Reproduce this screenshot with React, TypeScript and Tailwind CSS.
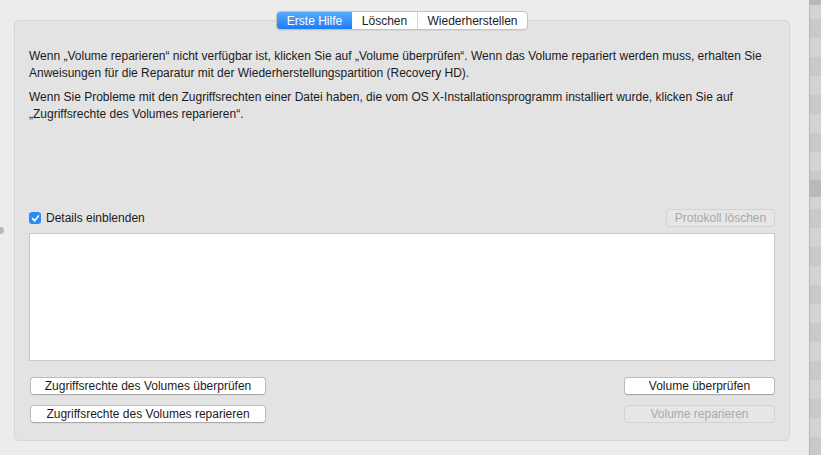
import React from "react";

const font = { fontFamily: '"Liberation Sans", Arial, sans-serif' };

function Btn({ children, disabled, w }: { children: React.ReactNode; disabled?: boolean; w: string }) {
  return (
    <div
      className={`${w} h-[18px] flex items-center justify-center rounded-[4px] border text-[12px] leading-none ${
        disabled
          ? "border-[#d2d2d2] bg-[#e6e6e6] text-[#a9a9a9]"
          : "border-[#bdbdbd] border-b-[#a9a9a9] bg-white text-[#1c1c1c] shadow-[0_0.5px_0_rgba(0,0,0,0.08)]"
      }`}
    >
      {children}
    </div>
  );
}

export default function App() {
  return (
    <div className="w-[821px] h-[455px] flex bg-[#ececec] overflow-hidden relative" style={font}>
      <div className="absolute left-[-3px] top-[227px] w-[7px] h-[7px] rounded-full bg-[#b9b9b9]" />
      <div className="w-[809px] h-full">
        <div className="ml-[14px] mt-[20px] w-[776px] h-[421px] rounded-[5px] bg-[#e3e3e3] border border-[#d6d6d6] flex flex-col px-[14px]">
          <div className="-mt-[10px] flex justify-center">
            <div className="flex h-[19px] rounded-[4px] border border-[#c3c3c3] bg-white text-[12px] leading-none overflow-hidden shadow-[0_1px_0_rgba(0,0,0,0.05)]">
              <div className="w-[75px] flex items-center justify-center text-white bg-[linear-gradient(#58acfc,#1c7cf4)]">
                Erste Hilfe
              </div>
              <div className="w-[65px] flex items-center justify-center text-[#1c1c1c]">Löschen</div>
              <div className="w-[110px] flex items-center justify-center text-[#1c1c1c] border-l border-[#d3d3d3]">
                Wiederherstellen
              </div>
            </div>
          </div>
          <div className="mt-[18px] text-[12px] leading-[17px] text-[#1b1b1b] pr-[10px]">
            <p>
              Wenn „Volume reparieren“ nicht verfügbar ist, klicken Sie auf „Volume überprüfen“. Wenn das Volume repariert werden muss, erhalten Sie Anweisungen für die Reparatur mit der Wiederherstellungspartition (Recovery HD).
            </p>
            <p className="mt-[7px]">
              Wenn Sie Probleme mit den Zugriffsrechten einer Datei haben, die vom OS X-Installationsprogramm installiert wurde, klicken Sie auf „Zugriffsrechte des Volumes reparieren“.
            </p>
          </div>
          <div className="mt-[86px] flex items-center justify-between h-[18px]">
            <div className="flex items-center gap-[5px]">
              <div className="w-[12px] h-[12px] rounded-[3px] bg-[#2a8bf2] flex items-center justify-center">
                <svg width="9" height="9" viewBox="0 0 10 10">
                  <path d="M1.8 5.2 L4.1 7.6 L8.3 2.2" fill="none" stroke="white" strokeWidth="1.8" strokeLinecap="round" strokeLinejoin="round" />
                </svg>
              </div>
              <span className="text-[12px] text-[#1b1b1b]">Details einblenden</span>
            </div>
            <Btn w="w-[109px]" disabled>
              Protokoll löschen
            </Btn>
          </div>
          <div className="mt-[6px] h-[128px] bg-white border border-[#c9c9c9]" />
          <div className="mt-[16px] flex justify-between pl-[1px]">
            <Btn w="w-[236px]">Zugriffsrechte des Volumes überprüfen</Btn>
            <Btn w="w-[151px]">Volume überprüfen</Btn>
          </div>
          <div className="mt-[10px] flex justify-between pl-[1px]">
            <Btn w="w-[236px]">Zugriffsrechte des Volumes reparieren</Btn>
            <Btn w="w-[151px]" disabled>
              Volume reparieren
            </Btn>
          </div>
        </div>
      </div>
      <div className="w-[12px] h-full border-l border-[#b5b5b5] bg-[repeating-linear-gradient(#d3d3d3_0px,#d3d3d3_19px,#c9c9c9_19px,#c9c9c9_38px)] relative">
        <div className="h-[5px] bg-[#b8b8b8]" />
        <div className="absolute top-[180px] left-0 right-0 h-[17px] bg-[#b9b9b9]" />
      </div>
    </div>
  );
}
